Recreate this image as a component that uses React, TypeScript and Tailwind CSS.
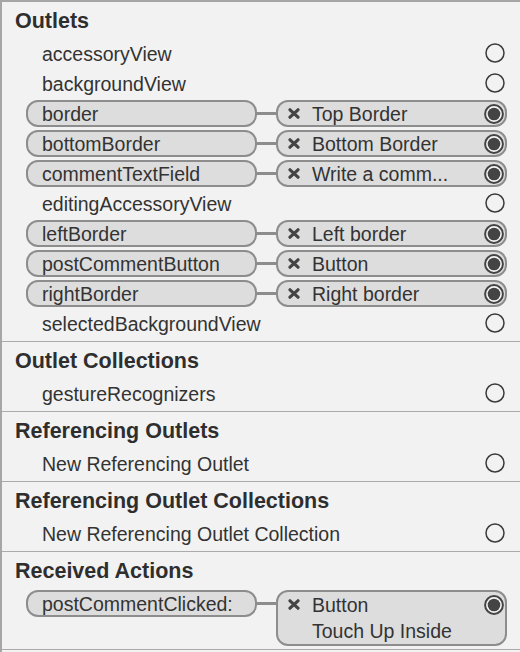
import React from 'react';

type Link = { name: string; target?: string; target2?: string };

const outlets: Link[] = [
  { name: 'accessoryView' },
  { name: 'backgroundView' },
  { name: 'border', target: 'Top Border' },
  { name: 'bottomBorder', target: 'Bottom Border' },
  { name: 'commentTextField', target: 'Write a comm...' },
  { name: 'editingAccessoryView' },
  { name: 'leftBorder', target: 'Left border' },
  { name: 'postCommentButton', target: 'Button' },
  { name: 'rightBorder', target: 'Right border' },
  { name: 'selectedBackgroundView' },
];

const sections: { title: string; rows: Link[] }[] = [
  { title: 'Outlets', rows: outlets },
  { title: 'Outlet Collections', rows: [{ name: 'gestureRecognizers' }] },
  { title: 'Referencing Outlets', rows: [{ name: 'New Referencing Outlet' }] },
  { title: 'Referencing Outlet Collections', rows: [{ name: 'New Referencing Outlet Collection' }] },
  { title: 'Received Actions', rows: [{ name: 'postCommentClicked:', target: 'Button', target2: 'Touch Up Inside' }] },
];

function Dot({ filled }: { filled?: boolean }) {
  if (filled) {
    return (
      <svg width="20" height="20" viewBox="0 0 20 20" className="shrink-0">
        <circle cx="10" cy="10" r="8.9" fill="#f6f6f6" stroke="#444" strokeWidth="2" />
        <circle cx="10" cy="10" r="6.3" fill="#444" />
      </svg>
    );
  }
  return (
    <svg width="20" height="20" viewBox="0 0 20 20" className="shrink-0">
      <circle cx="10" cy="10" r="9" fill="none" stroke="#3a3a3a" strokeWidth="1.5" />
    </svg>
  );
}

function Cross() {
  return (
    <svg width="12" height="11" viewBox="0 0 12 11" className="shrink-0">
      <path d="M2 1.8 L10 9.2 M10 1.8 L2 9.2" stroke="#444" strokeWidth="3.2" strokeLinecap="round" />
    </svg>
  );
}

function Row({ row }: { row: Link }) {
  if (!row.target) {
    return (
      <div className="flex h-[30px] items-center pl-[40px] pr-[15px]">
        <span className="flex-1 whitespace-nowrap pt-[3px]">{row.name}</span>
        <Dot />
      </div>
    );
  }
  const tall = !!row.target2;
  return (
    <div className={tall ? 'flex items-start pl-[24px] pr-[13px] pt-[2px]' : 'flex h-[30px] items-center pl-[24px] pr-[13px] pt-[1px]'}>
      <div className="flex h-[27px] w-[231px] shrink-0 items-center rounded-[12px] border-2 border-[#8d8d8d] bg-[#dddddd] pl-[14px] pt-[2px] whitespace-nowrap">
        {row.name}
      </div>
      <div className={tall ? 'mt-[12px] h-[3px] w-[19px] shrink-0 bg-[#8d8d8d]' : 'h-[3px] w-[19px] shrink-0 bg-[#8d8d8d]'} />
      <div className="flex-1 rounded-[12px] border-2 border-[#8d8d8d] bg-[#dddddd] pl-[10px] pr-[1px]">
        <div className={tall ? 'flex h-[25px] items-center' : 'flex h-[23px] items-center'}>
          <Cross />
          <span className="ml-[12px] flex-1 whitespace-nowrap pt-[3px]">{row.target}</span>
          <Dot filled />
        </div>
        {tall && <div className="flex h-[27px] items-center pl-[24px] pt-[2px] whitespace-nowrap">{row.target2}</div>}
      </div>
    </div>
  );
}

export default function App() {
  return (
    <div
      className="min-h-screen w-[520px] border-l-2 border-t-2 border-[#a6a6a6] bg-[#f2f2f2] text-[19.5px] text-[#333]"
      style={{ fontFamily: '"Liberation Sans", Arial, sans-serif' }}
    >
      {sections.map((s) => (
        <div key={s.title} className="border-b border-[#ababab] pb-[3px]">
          <div className="flex h-9 items-center pl-[13px] pt-[2px] text-[21.5px] font-bold text-[#2e2e2e]">{s.title}</div>
          {s.rows.map((r) => (
            <Row key={r.name} row={r} />
          ))}
        </div>
      ))}
    </div>
  );
}
